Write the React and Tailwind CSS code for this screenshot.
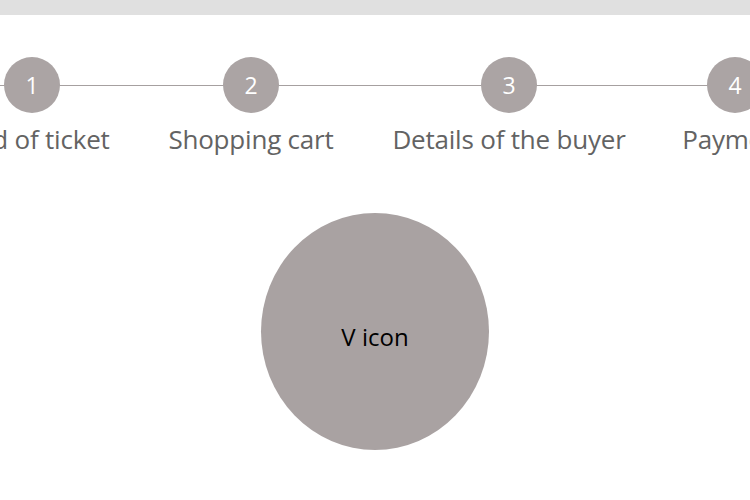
export default function App() {
  const steps = [
    { n: 1, label: "Kind of ticket", w: 154 },
    { n: 2, label: "Shopping cart", w: 166 },
    { n: 3, label: "Details of the buyer", w: 232 },
    { n: 4, label: "Payment", w: 102 },
  ];
  return (
    <div
      className="w-[750px] h-[500px] bg-white overflow-hidden"
      style={{ fontFamily: '"Open Sans", "Noto Sans", sans-serif' }}
    >
      <div className="h-[15px] bg-[#e0e0e0]" />
      <div className="relative mt-[42px]">
        <div className="absolute left-0 right-0 top-[28px] h-px bg-[#a6a0a0]" />
        <div className="relative flex gap-[59px] ml-[-45px]">
          {steps.map((s) => (
            <div
              key={s.n}
              className="flex flex-col items-center shrink-0"
              style={{ width: s.w }}
            >
              <div className="w-[56px] h-[56px] rounded-full bg-[#aba4a4] flex items-center justify-center text-white text-[23px] leading-none">
                {s.n}
              </div>
              <div className="mt-[11px] whitespace-nowrap text-[26px] leading-[30px] text-[#636363] tracking-[-0.2px]">
                {s.label}
              </div>
            </div>
          ))}
        </div>
      </div>
      <div className="flex justify-center mt-[59px]">
        <div className="w-[228px] h-[237px] rounded-[50%] bg-[#a9a2a2] flex items-center justify-center">
          <span className="text-[24px] text-black mt-[10px]">V icon</span>
        </div>
      </div>
    </div>
  );
}
